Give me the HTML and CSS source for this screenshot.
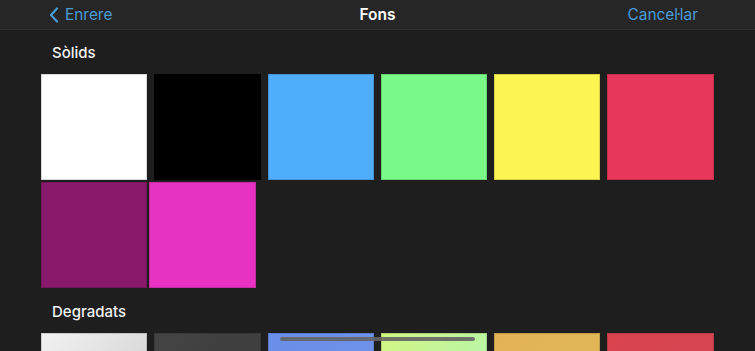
FILE: index.html
```html
<!DOCTYPE html>
<html lang="ca">
<head>
  <meta charset="UTF-8">
  <title>Fons</title>
  <link rel="stylesheet" href="styles.css">
</head>
<body>

  <!-- Barra de navegació -->
  <header class="navbar">
    <a class="nav-back" href="#">
      <svg class="chevron" width="10" height="16" viewBox="0 0 10 16">
        <path d="M8 1.5 L2 8 L8 14.5" fill="none" stroke="currentColor" stroke-width="2.2" stroke-linecap="round" stroke-linejoin="round"/>
      </svg>
      Enrere
    </a>
    <h1 class="nav-title">Fons</h1>
    <a class="nav-cancel" href="#">Cancel·lar</a>
  </header>

  <!-- Colors sòlids -->
  <section class="section">
    <h2 class="section-title">Sòlids</h2>
    <div class="swatch-row">
      <div class="swatch white"></div>
      <div class="swatch black"></div>
      <div class="swatch blue"></div>
      <div class="swatch green"></div>
      <div class="swatch yellow"></div>
      <div class="swatch red"></div>
    </div>
    <div class="swatch-row tight">
      <div class="swatch purple"></div>
      <div class="swatch pink"></div>
    </div>
  </section>

  <!-- Degradats -->
  <section class="section">
    <h2 class="section-title">Degradats</h2>
    <div class="swatch-row">
      <div class="swatch g-light"></div>
      <div class="swatch g-dark"></div>
      <div class="swatch g-blue"></div>
      <div class="swatch g-green"></div>
      <div class="swatch g-orange"></div>
      <div class="swatch g-red"></div>
    </div>
  </section>

  <div class="home-indicator"></div>

</body>
</html>
```
FILE: styles.css
```css
/* Estil general */
html {
  overflow: hidden;
}

body {
  margin: 0;
  background-color: #1e1e1f;
  font-family: Inter, "Noto Sans", sans-serif;
  color: #fff;
  height: 351px;
  overflow: hidden;
  position: relative;
}

/* Barra superior */
.navbar {
  height: 29px;
  background-color: #262627;
  border-bottom: 1px solid #303031;
  display: flex;
  align-items: center;
  justify-content: space-between;
  padding: 0 57px 0 49px;
  position: relative;
}

.nav-back,
.nav-cancel {
  color: #4a9bd3;
  text-decoration: none;
  font-size: 15.4px;
  display: flex;
  align-items: center;
}

.chevron {
  margin-right: 6px;
}

.nav-title {
  position: absolute;
  left: 0;
  right: 0;
  margin: 0;
  text-align: center;
  font-size: 15.5px;
  font-weight: 600;
  pointer-events: none;
}

/* Seccions */
.section {
  padding: 0 41px;
}

.section-title {
  margin: 0;
  padding: 13px 0 0 11px;
  height: 31px;
  font-size: 15px;
  font-weight: 500;
  color: #f2f2f2;
}

.swatch-row {
  display: flex;
  gap: 7px;
  margin-bottom: 2px;
}

.swatch-row.tight {
  gap: 2px;
  margin-bottom: 1px;
}

.swatch {
  width: 106.3px;
  height: 106px;
  flex: none;
  box-shadow: inset 0 0 0 1px rgba(0,0,0,0.15);
}

/* Sòlids */
.white  { background-color: #ffffff; }
.black  { background-color: #000000; }
.blue   { background-color: #4fadfb; }
.green  { background-color: #79f987; }
.yellow { background-color: #fdf552; }
.red    { background-color: #e7375a; }
.purple { background-color: #88196b; }
.pink   { background-color: #e832c1; }

/* Degradats */
.g-light  { background: linear-gradient(135deg, #f2f2f2, #c9c9c9); }
.g-dark   { background: linear-gradient(135deg, #444444, #3a3a3a); }
.g-blue   { background: linear-gradient(135deg, #6a8fea, #7092e6); }
.g-green  { background: linear-gradient(135deg, #d2f582, #a9f5c0); }
.g-orange { background: linear-gradient(135deg, #e2b356, #deb85a); }
.g-red    { background: linear-gradient(135deg, #d9444e, #d24656); }

/* Indicador d'inici */
.home-indicator {
  position: absolute;
  left: 280px;
  top: 337px;
  width: 195px;
  height: 4px;
  border-radius: 2px;
  background-color: rgba(100,100,100,0.9);
}
```
